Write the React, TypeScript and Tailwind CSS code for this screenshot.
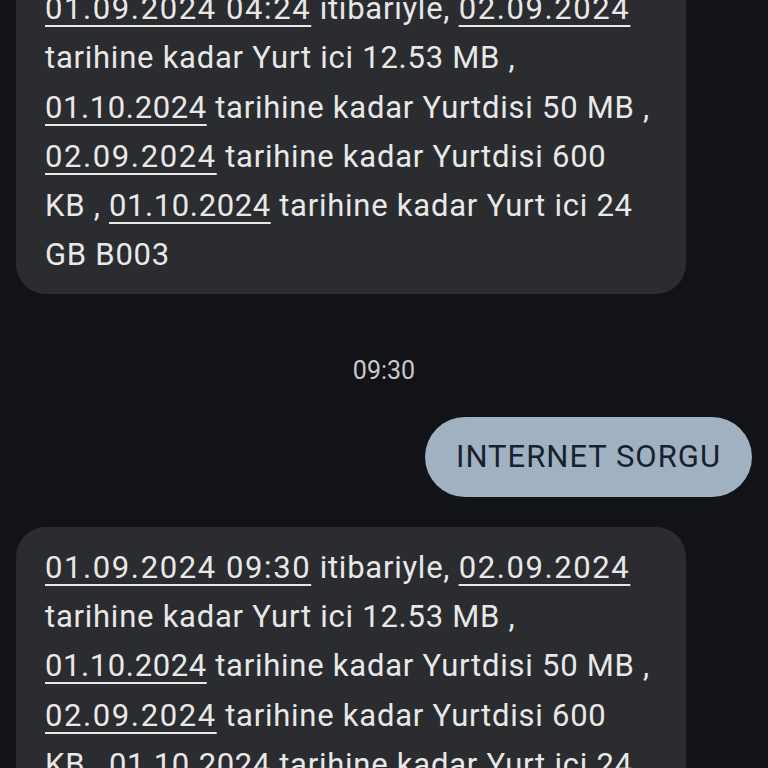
import React from "react";

type Part = { text: string; link?: boolean };

const line = (...parts: (string | [string])[]): Part[] =>
  parts.map((p) => (typeof p === "string" ? { text: p } : { text: p[0], link: true }));

const messageLines = (stamp: string): Part[][] => [
  line([`01.09.2024 ${stamp}`], " itibariyle, ", ["02.09.2024"]),
  line("tarihine kadar Yurt ici 12.53 MB ,"),
  line(["01.10.2024"], " tarihine kadar Yurtdisi 50 MB ,"),
  line(["02.09.2024"], " tarihine kadar Yurtdisi 600"),
  line("KB , ", ["01.10.2024"], " tarihine kadar Yurt ici 24"),
  line("GB B003"),
];

const Bubble = ({ stamp, className }: { stamp: string; className?: string }) => {
  return (
    <div
      className={`w-[670px] rounded-[30px] bg-[#2a2c2f] pl-[29px] pr-4 pt-[16px] pb-[14px] text-[31px] leading-[49.3px] tracking-[0.75px] text-[#e8e8e8] ${className ?? ""}`}
    >
      {messageLines(stamp).map((parts, i) => (
        <div key={i} className="whitespace-pre">
          {parts.map((p, j) =>
            p.link ? (
              <span
                key={j}
                className={`underline decoration-2 underline-offset-[6px] ${
                  p.text === "01.10.2024" ? "tracking-[0.6px]" : "tracking-[1.6px]"
                }`}
              >
                {p.text}
              </span>
            ) : (
              <span key={j}>{p.text}</span>
            )
          )}
        </div>
      ))}
    </div>
  );
};

const App = () => {
  return (
    <div
      className="h-[768px] w-[768px] overflow-hidden bg-[#111316]"
      style={{ fontFamily: "Roboto, 'Noto Sans', sans-serif" }}
    >
      <div className="flex flex-col px-4">
        <Bubble stamp="04:24" className="-mt-[32px]" />
        <p className="mt-[62px] text-center text-[25px] leading-[30px] text-[#c9c9c9]">
          09:30
        </p>
        <div className="mt-[31px] flex justify-end">
          <div className="flex h-[80px] w-[327px] items-center justify-center rounded-full bg-[#a0b2c2] text-[31px] tracking-[1px] text-[#18222c]">
            INTERNET SORGU
          </div>
        </div>
        <Bubble stamp="09:30" className="mt-[30px]" />
      </div>
    </div>
  );
};

export default App;
